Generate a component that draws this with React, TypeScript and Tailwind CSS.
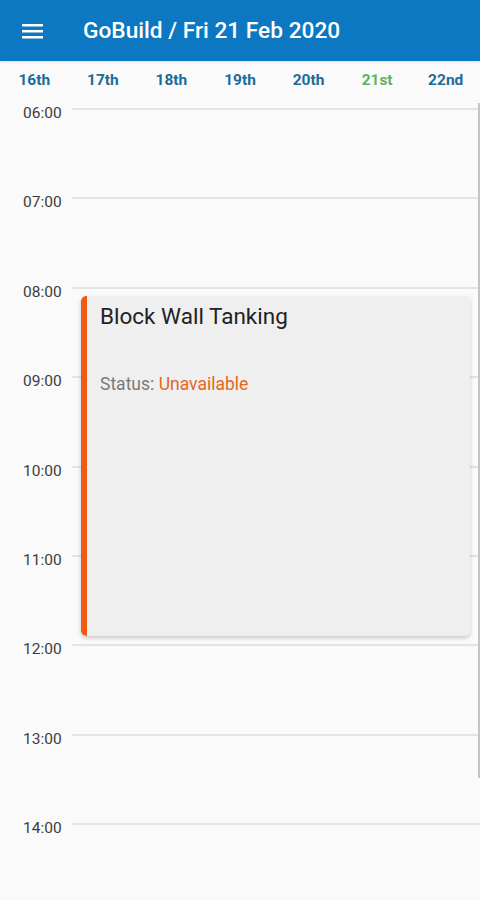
import React from 'react';

const days = ['16th', '17th', '18th', '19th', '20th', '21st', '22nd'];
const hours = ['06:00', '07:00', '08:00', '09:00', '10:00', '11:00', '12:00', '13:00', '14:00'];

const App: React.FC = () => {
  return (
    <div className="w-[480px] h-[900px] overflow-hidden bg-[#fafafa] font-['Roboto',sans-serif] flex flex-col">
      {/* App bar */}
      <div className="h-[61px] bg-[#0b78c1] flex items-center shrink-0 shadow-sm">
        <div className="w-[83px] flex items-center pl-[22px]">
          <svg width="21" height="16" viewBox="0 0 21 16">
            <rect x="0" y="1" width="21" height="2.5" fill="#fff" />
            <rect x="0" y="7" width="21" height="2.5" fill="#fff" />
            <rect x="0" y="13" width="21" height="2.5" fill="#fff" />
          </svg>
        </div>
        <h1 className="text-white text-[22.7px] font-medium pt-[2px]">GoBuild / Fri 21 Feb 2020</h1>
      </div>

      {/* Day strip */}
      <div className="grid grid-cols-7 h-[38px] pt-[2px] items-center shrink-0">
        {days.map((d) => (
          <div
            key={d}
            className={`text-center text-[15.5px] font-bold ${d === '21st' ? 'text-[#62b35a]' : 'text-[#1c6c9b]'}`}
          >
            {d}
          </div>
        ))}
      </div>

      {/* Timeline */}
      <div className="relative flex-1 pt-[1px]">
        {hours.map((h) => (
          <div key={h} className="h-[89.4px]">
            <div className="flex items-start h-[18px]">
              <span className="w-[72px] pl-[23px] pt-[4px] leading-[18px] text-[15.5px] text-[#3d3d3d]">{h}</span>
              <div className="flex-1 h-[2px] mt-[8px] bg-[#e4e4e4]" />
            </div>
          </div>
        ))}

        {/* Event */}
        <div className="absolute left-[81px] top-[197px] w-[389px] h-[340px] flex rounded-[5px] bg-[#efefef] shadow-[0_2px_4px_rgba(0,0,0,0.2)] overflow-hidden">
          <div className="w-[6px] bg-[#f05a14] rounded-l-[5px]" />
          <div className="flex-1 pl-[13px] pt-[5px]">
            <div className="text-[22.5px] text-[#222] leading-[30px]">Block Wall Tanking</div>
            <div className="mt-[42px] text-[17.5px] leading-[22px] text-[#7a7a7a]">
              Status: <span className="text-[#e8661e]">Unavailable</span>
            </div>
          </div>
        </div>

        {/* Scrollbar */}
        <div className="absolute right-0 top-[4px] w-[2px] h-[675px] bg-[#c4c4c4]" />
      </div>
    </div>
  );
};

export default App;
